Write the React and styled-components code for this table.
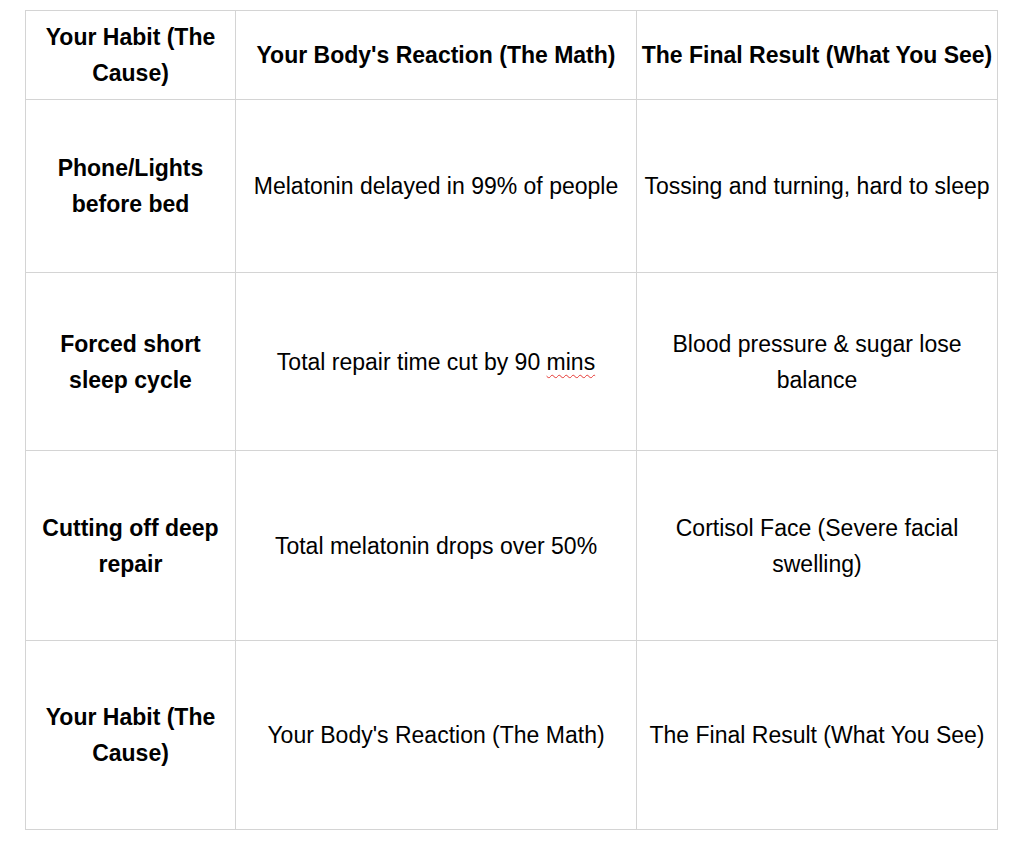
import React from "react";
import styled, { createGlobalStyle } from "styled-components";

const GlobalStyle = createGlobalStyle`
  html, body {
    margin: 0;
    padding: 0;
    background: #ffffff;
  }
  body {
    font-family: "Liberation Sans", Arial, sans-serif;
    color: #000;
  }
`;

const Page = styled.div`
  padding: 10px 0 0 25px;
`;

const Table = styled.table`
  border-collapse: collapse;
  table-layout: fixed;
  width: 972px;
  font-size: 23px;
  line-height: 36px;
`;

const Col = styled.col`
  width: ${(p) => p.w}px;
`;

const Row = styled.tr`
  height: ${(p) => p.h}px;
`;

const Cell = styled.td`
  border: 1px solid #d4d4d4;
  padding: 0 4px;
  text-align: center;
  vertical-align: middle;
  font-weight: ${(p) => (p.bold ? "bold" : "normal")};
`;

const Squiggle = styled.span`
  text-decoration: underline wavy #e53935;
  text-decoration-thickness: 1px;
  text-underline-offset: 4px;
`;

const rows = [
  {
    h: 89,
    head: true,
    cells: [
      "Your Habit (The Cause)",
      "Your Body's Reaction (The Math)",
      "The Final Result (What You See)",
    ],
  },
  {
    h: 173,
    cells: [
      "Phone/Lights before bed",
      "Melatonin delayed in 99% of people",
      "Tossing and turning, hard to sleep",
    ],
  },
  {
    h: 178,
    cells: [
      "Forced short sleep cycle",
      <>
        Total repair time cut by 90 <Squiggle>mins</Squiggle>
      </>,
      "Blood pressure & sugar lose balance",
    ],
  },
  {
    h: 190,
    cells: [
      "Cutting off deep repair",
      "Total melatonin drops over 50%",
      "Cortisol Face (Severe facial swelling)",
    ],
  },
  {
    h: 189,
    cells: [
      "Your Habit (The Cause)",
      "Your Body's Reaction (The Math)",
      "The Final Result (What You See)",
    ],
  },
];

const App = () => {
  return (
    <>
      <GlobalStyle />
      <Page>
        <Table>
          <colgroup>
            <Col w={210} />
            <Col w={401} />
            <Col w={361} />
          </colgroup>
          <tbody>
            {rows.map((r, i) => (
              <Row key={i} h={r.h}>
                {r.cells.map((c, j) => (
                  <Cell key={j} bold={r.head || j === 0}>
                    {c}
                  </Cell>
                ))}
              </Row>
            ))}
          </tbody>
        </Table>
      </Page>
    </>
  );
};

export default App;
